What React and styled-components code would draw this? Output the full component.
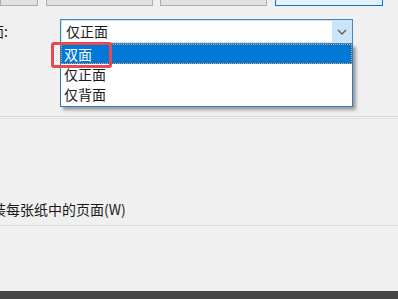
import React from 'react';
import styled, { createGlobalStyle } from 'styled-components';

const GlobalStyle = createGlobalStyle`
  html, body {
    margin: 0;
    padding: 0;
    background: #f0f0f0;
  }
`;

const Page = styled.div`
  width: 398px;
  height: 299px;
  display: flex;
  flex-direction: column;
  overflow: hidden;
  background: #f0f0f0;
  font-family: "Noto Sans CJK SC", "Microsoft YaHei", sans-serif;
  font-size: 14px;
  color: #1a1a1a;
`;

const ButtonStrip = styled.div`
  height: 6px;
  display: flex;
  align-items: flex-end;
  overflow: hidden;
`;

const Button = styled.div`
  flex: none;
  box-sizing: border-box;
  width: ${({ $w }) => $w}px;
  margin-left: ${({ $gap }) => $gap}px;
  height: 24px;
  border: 1px solid ${({ $primary }) => ($primary ? '#0078d7' : '#adadad')};
  background: ${({ $primary }) => ($primary ? '#e5f1fb' : '#e1e1e1')};
`;

const FieldRow = styled.div`
  margin-top: 13px;
  height: 25px;
  display: flex;
  align-items: center;
`;

const Label = styled.span`
  width: 70px;
  margin-left: -10px;
  line-height: 25px;
`;

const ComboWrap = styled.div`
  position: relative;
  width: 293px;
  height: 25px;
`;

const Combo = styled.div`
  box-sizing: border-box;
  width: 100%;
  height: 100%;
  display: flex;
  border: 1px solid #3f86c5;
  background: #cce4f7;
`;

const ComboValue = styled.div`
  flex: 1;
  background: #fff;
  margin: 1px 0 1px 1px;
  padding-left: 4px;
  line-height: 21px;
`;

const ComboButton = styled.div`
  width: 20px;
  display: flex;
  align-items: center;
  justify-content: center;
`;

const List = styled.div`
  position: absolute;
  left: 0;
  top: 25px;
  box-sizing: border-box;
  width: 293px;
  height: 63px;
  border: 1px solid #2f77bf;
  border-top: none;
  background: #fff;
  box-shadow: 3px 3px 3px rgba(0, 0, 0, 0.35);
`;

const Option = styled.div`
  box-sizing: border-box;
  height: 20px;
  padding-left: 2px;
  color: ${({ $active }) => ($active ? '#fff' : '#1a1a1a')};
  background: ${({ $active }) => ($active ? '#0078d7' : 'transparent')};
  border: 1px dotted ${({ $active }) => ($active ? '#f0a040' : 'transparent')};
  line-height: 18px;
`;

const Highlight = styled.div`
  position: absolute;
  left: -9px;
  top: 23px;
  width: 61px;
  height: 26px;
  box-sizing: border-box;
  border: 3px solid #e64a50;
  border-radius: 3px;
`;

const Divider = styled.div`
  margin-top: ${({ $top }) => $top}px;
  height: 1px;
  background: ${({ $color }) => $color || '#dadada'};
`;

const CheckText = styled.div`
  margin-top: 79px;
  margin-left: -8px;
  height: 27px;
  line-height: 22px;
  white-space: nowrap;
`;

const Filler = styled.div`
  flex: 1;
`;

const TaskBar = styled.div`
  height: 8px;
  background: #454545;
`;

const Chevron = () => (
  <svg width="10" height="6" viewBox="0 0 10 6">
    <path d="M1 1l4 4 4-4" fill="none" stroke="#606060" strokeWidth="1.4" />
  </svg>
);

const App = () => {
  return (
    <Page>
      <GlobalStyle />
      <ButtonStrip>
        <Button $w={38} $gap={0} />
        <Button $w={107} $gap={8} />
        <Button $w={107} $gap={7} />
        <Button $w={108} $gap={8} $primary />
      </ButtonStrip>
      <FieldRow>
        <Label>面:</Label>
        <ComboWrap>
          <Combo>
            <ComboValue>仅正面</ComboValue>
            <ComboButton>
              <Chevron />
            </ComboButton>
          </Combo>
          <List>
            <Option $active>双面</Option>
            <Option>仅正面</Option>
            <Option>仅背面</Option>
          </List>
          <Highlight />
        </ComboWrap>
      </FieldRow>
      <Divider $top={72} />
      <Divider $top={1} $color="#e4e4e4" />
      <CheckText>装每张纸中的页面(W)</CheckText>
      <Divider $top={0} />
      <Filler />
      <TaskBar />
    </Page>
  );
};

export default App;
